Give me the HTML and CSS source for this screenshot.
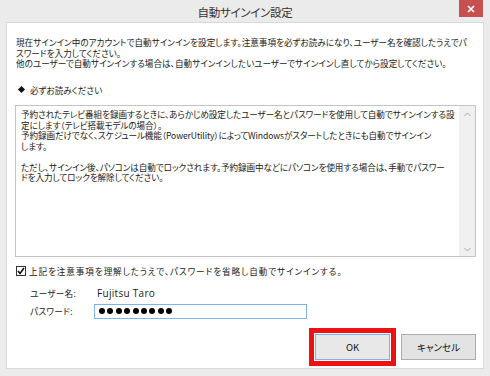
FILE: index.html
```html
<!DOCTYPE html>
<html lang="ja">
<head>
    <meta charset="UTF-8">
    <title>自動サインイン設定</title>
    <link rel="stylesheet" href="styles.css">
</head>
<body>
    <div class="window">
        <div class="titlebar">
            <span></span>
            <h1 class="title">自動サインイン設定</h1>
            <button class="close" aria-label="閉じる">
                <svg width="8" height="8" viewBox="0 0 8 8"><path d="M1 1 L7 7 M7 1 L1 7" stroke="#fff" stroke-width="1.6" fill="none"/></svg>
            </button>
        </div>

        <div class="panel">
            <p class="intro">現在サインイン中のアカウントで自動サインインを設定します。注意事項を必ずお読みになり、ユーザー名を確認したうえでパ<br>スワードを入力してください。<br>他のユーザーで自動サインインする場合は、自動サインインしたいユーザーでサインインし直してから設定してください。</p>

            <p class="notice-head"><span class="diamond"></span>必ずお読みください</p>

            <div class="notice">
                <div class="notice-text">
                    予約されたテレビ番組を録画するときに、あらかじめ設定したユーザー名とパスワードを使用して自動でサインインする設<br>定にします（テレビ搭載モデルの場合）。<br>予約録画だけでなく、スケジュール機能（PowerUtility）によってWindowsがスタートしたときにも自動でサインイン<br>します。<br><br>ただし、サインイン後、パソコンは自動でロックされます。予約録画中などにパソコンを使用する場合は、手動でパスワー<br>ドを入力してロックを解除してください。
                </div>
                <div class="scrollbar">
                    <svg width="7" height="5" viewBox="0 0 7 5"><path d="M0.5 4 L3.5 1 L6.5 4" stroke="#a6a6a6" fill="none"/></svg>
                    <svg width="7" height="5" viewBox="0 0 7 5"><path d="M0.5 1 L3.5 4 L6.5 1" stroke="#a6a6a6" fill="none"/></svg>
                </div>
            </div>

            <label class="agree">
                <span class="checkbox">
                    <svg width="8" height="8" viewBox="0 0 8 8"><path d="M1 4 L3 6.5 L7 1" stroke="#111" stroke-width="1.6" fill="none"/></svg>
                </span>
                <span class="agree-text">上記を注意事項を理解したうえで、パスワードを省略し自動でサインインする。</span>
            </label>

            <div class="fields">
                <span class="field-label">ユーザー名:</span>
                <span class="field-value">Fujitsu Taro</span>
                <span class="field-label">パスワード:</span>
                <div class="password">
                    <span class="dot"></span><span class="dot"></span><span class="dot"></span>
                    <span class="dot"></span><span class="dot"></span><span class="dot"></span>
                    <span class="dot"></span><span class="dot"></span><span class="dot"></span>
                </div>
            </div>

            <div class="actions">
                <div class="highlight">
                    <button class="btn btn-default">OK</button>
                </div>
                <button class="btn">キャンセル</button>
            </div>
        </div>
    </div>
</body>
</html>
```

FILE: styles.css
```css
* { box-sizing: border-box; }
body {
    margin: 0;
    background: #ebebeb;
    font-family: "Noto Sans CJK JP", "Noto Sans", sans-serif;
    font-size: 8.6px;
    line-height: 10.5px;
    color: #1a1a1a;
    font-feature-settings: "palt";
}
p { margin: 0; }
.window {
    width: 490px;
    height: 376px;
    display: flex;
    flex-direction: column;
    background: #ebebeb;
}
.titlebar {
    height: 22px;
    display: grid;
    grid-template-columns: 1fr auto 1fr;
    align-items: start;
}
.title {
    margin: 0;
    padding-top: 5px;
    font-size: 11.5px;
    line-height: 15px;
    font-weight: normal;
    color: #333;
    letter-spacing: -0.3px;
}
.close {
    justify-self: end;
    margin-right: 7px;
    width: 24px;
    height: 17px;
    border: none;
    padding: 0;
    background: #c75050;
    display: flex;
    align-items: center;
    justify-content: center;
}
.panel {
    flex: 1;
    margin: 0 6px 7px 6px;
    background: #fff;
    border: 1px solid #d9d9d9;
    padding: 14px 7px 2px 8px;
    display: flex;
    flex-direction: column;
}
.intro {
    padding-left: 1px;
    white-space: nowrap;
}
.notice-head {
    margin-top: 16px;
    display: flex;
    align-items: center;
    gap: 6px;
    padding-left: 3px;
}
.diamond {
    width: 5px;
    height: 5px;
    background: #111;
    transform: rotate(45deg);
    margin-left: 1px;
}
.notice {
    margin-top: 10px;
    height: 152px;
    border: 1px solid #c4c4c4;
    display: flex;
}
.notice-text {
    flex: 1;
    padding: 3px 5px;
    white-space: nowrap;
    overflow: hidden;
    letter-spacing: -0.1px;
}
.scrollbar {
    width: 16px;
    background: #f0f0f0;
    display: flex;
    flex-direction: column;
    justify-content: space-between;
    align-items: center;
    padding: 6px 0 4px;
}
.agree {
    margin-top: 9px;
    display: flex;
    align-items: center;
    gap: 3px;
    padding-left: 1px;
}
.agree-text {
    letter-spacing: 0.9px;
}
.checkbox {
    width: 10px;
    height: 10px;
    border: 1px solid #333;
    background: #fff;
    display: flex;
    align-items: center;
    justify-content: center;
}
.fields {
    margin-top: 11px;
    display: grid;
    grid-template-columns: 64px 213px;
    grid-template-rows: 11px 15px;
    row-gap: 5px;
    align-items: center;
    padding-left: 15px;
}
.field-label {
    letter-spacing: 0.3px;
}
.field-value {
    padding-left: 3px;
    font-family: "Open Sans", "Noto Sans", sans-serif;
    font-size: 10px;
    letter-spacing: 0.3px;
}
.password {
    height: 15px;
    border: 1px solid #7eb4ea;
    display: flex;
    align-items: center;
    gap: 2.4px;
    padding-left: 4px;
}
.dot {
    width: 6px;
    height: 6px;
    border-radius: 50%;
    background: #000;
}
.actions {
    margin-top: 9px;
    display: flex;
    justify-content: flex-end;
    align-items: center;
    gap: 5px;
}
.highlight {
    border: 5px solid #ee1111;
    padding: 1px;
    background: #fff;
}
.btn {
    width: 75px;
    height: 26px;
    border: 1px solid #acacac;
    background: #e3e3e3;
    font-family: "Noto Sans CJK JP", "Noto Sans", sans-serif;
    font-size: 9.5px;
    color: #111;
    padding: 0;
    font-feature-settings: "palt";
}
.btn-default {
    display: block;
    border-color: #7eb4ea;
    background: #e8e8e8;
}
```
